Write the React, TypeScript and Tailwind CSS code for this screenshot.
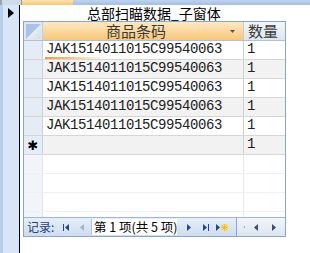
const codes = [
  "JAK1514011015C99540063",
  "JAK1514011015C99540063",
  "JAK1514011015C99540063",
  "JAK1514011015C99540063",
  "JAK1514011015C99540063",
];

function Tri({ dir, color }: { dir: "l" | "r"; color: string }) {
  return (
    <svg width="4" height="7" viewBox="0 0 4 7">
      {dir === "l" ? <path d="M4 0V7L0 3.5Z" fill={color} /> : <path d="M0 0V7L4 3.5Z" fill={color} />}
    </svg>
  );
}

export default function App() {
  return (
    <div className="w-[310px] h-[253px] bg-white flex flex-col overflow-hidden font-['Noto_Sans_CJK_SC',sans-serif]">
      {/* tab strip */}
      <div className="h-[5px] flex shrink-0">
        <div className="w-[2px] bg-[#9aa3b0]" />
        <div className="w-[19px] bg-[#cfdaea]" />
        <div className="w-[52px] bg-gradient-to-b from-[#fbe6b4] to-[#f6c46f] border-l border-[#b88f55]" />
        <div className="flex-1 bg-gradient-to-b from-[#bfd3ee] to-[#a4bee4]" />
      </div>

      <div className="flex flex-1 min-h-0">
        {/* main form record selector */}
        <div className="w-[20px] shrink-0 bg-[#d8e5f6] border-l-[3px] border-l-[#b6cdeb] border-r border-r-black">
          <svg width="6" height="10" viewBox="0 0 6 10" className="ml-[5px] mt-[3px]">
            <path d="M0 0V10L6 5Z" fill="#000" />
          </svg>
        </div>

        <div className="flex-1 flex flex-col pl-[3px]">
          <div className="h-[16px] leading-[16px] pl-[64px] text-[14px] text-black whitespace-nowrap">
            总部扫瞄数据_子窗体
          </div>

          {/* subform datasheet */}
          <div className="w-[263px] h-[216px] border border-[#8aa5cc] flex flex-col bg-white">
            {/* header */}
            <div className="flex h-[19px] shrink-0 border-b border-[#b4c0d2]">
              <div className="w-[19px] border-r border-[#c3cedd] bg-[#dfe7f3] flex items-center justify-center">
                <svg width="15" height="15" viewBox="0 0 15 15">
                  <defs>
                    <linearGradient id="sa" x1="0" y1="0" x2="1" y2="1">
                      <stop offset="0" stopColor="#ffffff" />
                      <stop offset="1" stopColor="#d3dbe6" />
                    </linearGradient>
                  </defs>
                  <rect x="0" y="0" width="15" height="15" fill="#a9c2e7" />
                  <path d="M15 0V15H0Z" fill="url(#sa)" />
                </svg>
              </div>
              <div className="w-[201px] border-r border-[#c3cedd] bg-gradient-to-b from-[#fde9c2] to-[#f8c679] flex items-center">
                <span className="pl-[63px] text-[15px] leading-[18px] text-[#3a3a3a] flex-1">商品条码</span>
                <svg width="5" height="3" viewBox="0 0 5 3" className="mr-[8px]">
                  <path d="M0 0H5L2.5 3Z" fill="#555" />
                </svg>
              </div>
              <div className="flex-1 bg-gradient-to-b from-[#f4f6fa] to-[#dfe6f0] pl-[4px] text-[15px] leading-[18px] text-[#3a3a3a]">
                数量
              </div>
            </div>

            {/* rows */}
            {codes.map((c, i) => (
              <div
                key={i}
                className={i % 2 ? "flex h-[19px] shrink-0 border-b border-[#d6d6d6] bg-[#f2f2f2]" : "flex h-[19px] shrink-0 border-b border-[#d6d6d6] bg-white"}
              >
                <div className="w-[19px] border-r border-[#c8d1de] bg-[#e6ecf5]" />
                <div className="w-[201px] border-r border-[#d0d0d0] pl-[3px] font-['Liberation_Mono',monospace] text-[14px] tracking-[-0.4px] leading-[17px] text-[#202020] relative">
                  {c}
                  {i === 0 && (
                    <div className="absolute left-[2px] bottom-0 w-[62px] h-[2px] bg-gradient-to-r from-[#f29a2e] to-[#f29a2e00]" />
                  )}
                </div>
                <div className="flex-1 pl-[3px] font-['Liberation_Mono',monospace] text-[14px] leading-[17px] text-[#202020]">1</div>
              </div>
            ))}

            {/* new record row */}
            <div className="flex h-[19px] shrink-0 border-b border-[#d6d6d6] bg-[#f2f2f2]">
              <div className="w-[19px] border-r border-[#c8d1de] bg-[#e6ecf5] flex items-center justify-center font-['DejaVu_Sans',sans-serif] text-[13px] leading-none text-black">
                ✱
              </div>
              <div className="w-[201px] border-r border-[#d0d0d0]" />
              <div className="flex-1 pl-[3px] font-['Liberation_Mono',monospace] text-[14px] leading-[17px] text-[#202020]">1</div>
            </div>

            {/* empty area */}
            <div className="flex-1 flex flex-col min-h-0">
              {[0, 1, 2].map((k) => (
                <div key={k} className="flex h-[19px] shrink-0 border-b border-[#f0f0f0]">
                  <div className="w-[19px] border-r border-[#e2e7ef] bg-[#f1f4f9]" />
                  <div className="w-[201px] border-r border-[#e8e8e8]" />
                  <div className="flex-1" />
                </div>
              ))}
              <div className="flex flex-1">
                <div className="w-[19px] border-r border-[#e2e7ef] bg-[#f1f4f9]" />
                <div className="w-[201px] border-r border-[#e8e8e8]" />
              </div>
            </div>

            {/* navigation bar */}
            <div className="h-[19px] shrink-0 border-t border-[#9fb6d8] bg-gradient-to-b from-[#e6eefa] to-[#cfdcef] flex items-center">
              <div className="w-[34px] pl-[3px] text-[12px] leading-[18px] text-[#1e3f78] whitespace-nowrap">记录:</div>
              <div className="w-[15px] flex items-center justify-center">
                <div className="w-[1px] h-[7px] bg-[#1f4a8a]" />
                <div className="ml-[1px] flex"><Tri dir="l" color="#1f4a8a" /></div>
              </div>
              <div className="w-[17px] flex items-center justify-center">
                <Tri dir="l" color="#9fb2cf" />
              </div>
              <div className="ml-[1px] w-[86px] h-[16px] bg-white border-l border-[#b4c4dc] text-[12.5px] leading-[16px] text-black pl-[2px] whitespace-nowrap">
                第 1 项(共 5 项)
              </div>
              <div className="w-[23px] flex items-center justify-center">
                <Tri dir="r" color="#1f4a8a" />
              </div>
              <div className="w-[12px] flex items-center justify-center">
                <Tri dir="r" color="#1f4a8a" />
                <div className="ml-[1px] w-[1px] h-[7px] bg-[#1f4a8a]" />
              </div>
              <div className="w-[20px] flex items-center justify-center">
                <Tri dir="r" color="#1f4a8a" />
                <svg width="7" height="7" viewBox="0 0 7 7" className="ml-[1px]">
                  <rect x="0" y="0" width="7" height="7" fill="#f7e27a" />
                  <path d="M3.5 0V7M0 3.5H7M1 1L6 6M6 1L1 6" stroke="#e0b63a" strokeWidth="0.8" />
                </svg>
              </div>
              <div className="w-[4px]" />
              <div className="w-[1px] h-[19px] bg-[#8aa5cc]" />
              <div className="flex-1 h-[18px] bg-gradient-to-b from-[#f2f5fa] to-[#dce5f1] flex items-center">
                <div className="ml-[7px] w-[1px] h-[2px] bg-[#9aa8bc]" />
                <div className="ml-[9px] flex"><Tri dir="l" color="#3d4f6e" /></div>
                <div className="ml-[14px] flex"><Tri dir="r" color="#3d4f6e" /></div>
              </div>
            </div>
          </div>
        </div>
      </div>
    </div>
  );
}
